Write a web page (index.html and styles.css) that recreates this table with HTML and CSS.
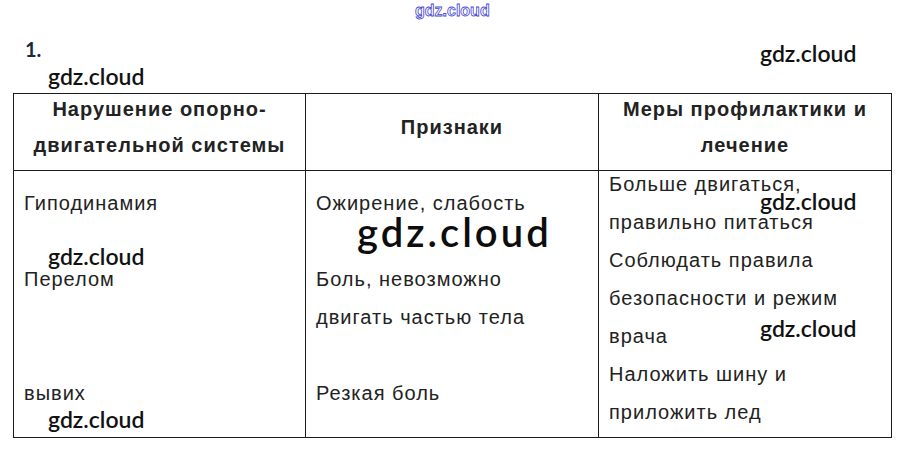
FILE: index.html
```html
<!DOCTYPE html>
<html lang="ru">
<head>
<meta charset="utf-8">
<title>gdz.cloud</title>
<link rel="stylesheet" href="styles.css">
</head>
<body>
<div class="page">
  <div class="num">1.</div>
  <table class="grid">
    <colgroup>
      <col class="c1">
      <col class="c2">
      <col class="c3">
    </colgroup>
    <thead>
      <tr class="head">
        <td><div class="hd">Нарушение опорно-<br>двигательной системы</div></td>
        <td><div class="hd">Признаки</div></td>
        <td><div class="hd">Меры профилактики и<br>лечение</div></td>
      </tr>
    </thead>
    <tbody>
      <tr class="first">
        <td><div class="tx">Гиподинамия</div></td>
        <td><div class="tx">Ожирение, слабость</div></td>
        <td><div class="tx">Больше двигаться,<br>правильно питаться</div></td>
      </tr>
      <tr>
        <td class="gap-below"><div class="tx">Перелом</div></td>
        <td><div class="tx">Боль, невозможно<br>двигать частью тела</div></td>
        <td><div class="tx">Соблюдать правила<br>безопасности и режим<br>врача</div></td>
      </tr>
      <tr class="last">
        <td><div class="tx">вывих</div></td>
        <td><div class="tx">Резкая боль</div></td>
        <td><div class="tx">Наложить шину и<br>приложить лед</div></td>
      </tr>
    </tbody>
  </table>

  <div class="wm-top">gdz.cloud</div>
  <div class="wm wm-a">gdz.cloud</div>
  <div class="wm wm-b">gdz.cloud</div>
  <div class="wm wm-c">gdz.cloud</div>
  <div class="wm wm-d">gdz.cloud</div>
  <div class="wm wm-e">gdz.cloud</div>
  <div class="wm wm-f">gdz.cloud</div>
  <div class="wm-big">gdz.cloud</div>
</div>
</body>
</html>
```

FILE: styles.css
```css
html, body {
  margin: 0;
  padding: 0;
  background: #ffffff;
}

.page {
  position: relative;
  width: 906px;
  height: 459px;
  padding-left: 13px;
  box-sizing: border-box;
  overflow: hidden;
}

.num {
  font-family: Lato, "Open Sans", sans-serif;
  font-size: 20px;
  font-weight: 700;
  line-height: 24px;
  color: #1a2840;
  padding: 37px 0 32px 12px;
}

.grid {
  border-collapse: collapse;
  table-layout: fixed;
  width: 878px;
  font-family: "Liberation Sans", Arial, sans-serif;
  font-size: 20px;
  letter-spacing: 1px;
  color: #222222;
  border: 1px solid #1c1c1c;
}

.c1 { width: 292px; }
.c2 { width: 293px; }
.c3 { width: 293px; }

.grid td {
  border-left: 1px solid #1c1c1c;
  border-right: 1px solid #1c1c1c;
  padding: 0 10px;
  vertical-align: middle;
}

.head td {
  border-bottom: 1px solid #1c1c1c;
  font-weight: bold;
  text-align: center;
  line-height: 36px;
  padding-bottom: 7px;
}

.hd {
  margin-top: -3px;
}

.tx {
  line-height: 38px;
  white-space: nowrap;
}

.first .tx {
  margin-top: -6px;
}

.last td {
  padding-bottom: 6px;
}

.grid td.gap-below {
  padding-bottom: 38px;
}

.wm {
  position: absolute;
  font-family: Lato, "Open Sans", sans-serif;
  font-weight: 600;
  font-size: 23px;
  line-height: 28px;
  color: #111111;
  white-space: nowrap;
}

.wm-a { left: 48px; top: 62px; }
.wm-b { left: 760px; top: 39px; }
.wm-c { left: 48px; top: 242px; }
.wm-d { left: 760px; top: 187px; }
.wm-e { left: 760px; top: 314px; }
.wm-f { left: 48px; top: 405px; }

.wm-big {
  position: absolute;
  left: 357px;
  top: 208px;
  font-family: Lato, "Open Sans", sans-serif;
  font-weight: 600;
  font-size: 40px;
  line-height: 48px;
  letter-spacing: 3px;
  color: #0d0d0d;
  white-space: nowrap;
}

.wm-top {
  position: absolute;
  left: 415px;
  top: 1px;
  font-family: "Liberation Sans", Arial, sans-serif;
  font-weight: bold;
  font-size: 16px;
  line-height: 20px;
  color: #ffffff;
  -webkit-text-stroke: 0.8px #4646d2;
  white-space: nowrap;
}
```
